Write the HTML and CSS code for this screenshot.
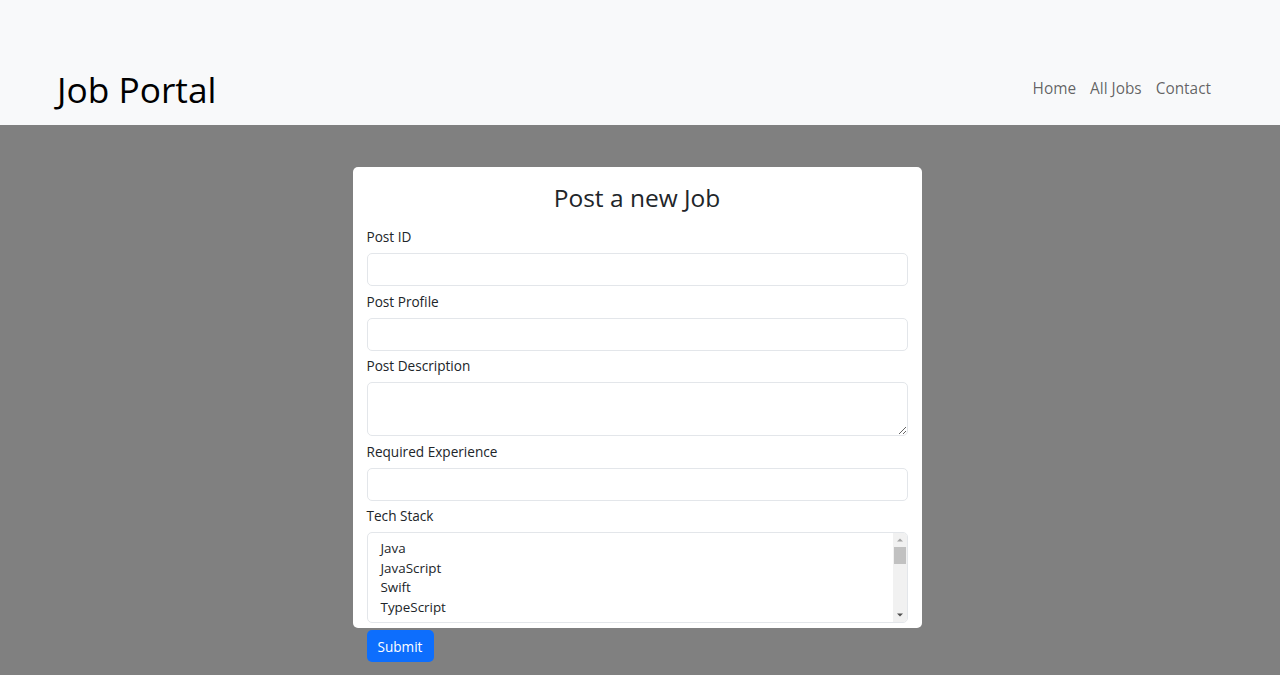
FILE: index.html
```html
<!DOCTYPE html>
<html lang="en">
<head>
<meta charset="utf-8">
<title>Job Portal</title>
<link rel="stylesheet" href="styles.css">
</head>
<body>
<header class="topbar">
  <a class="brand" href="#">Job Portal</a>
  <nav class="nav">
    <a class="nav-link" href="#">Home</a>
    <a class="nav-link" href="#">All Jobs</a>
    <a class="nav-link" href="#">Contact</a>
  </nav>
</header>
<main class="main">
  <form class="card">
    <h3 class="card-title">Post a new Job</h3>
    <div class="field">
      <label class="label" for="pid">Post ID</label>
      <input class="control" id="pid" type="text">
    </div>
    <div class="field">
      <label class="label" for="pprof">Post Profile</label>
      <input class="control" id="pprof" type="text">
    </div>
    <div class="field">
      <label class="label" for="pdesc">Post Description</label>
      <textarea class="control area" id="pdesc"></textarea>
    </div>
    <div class="field">
      <label class="label" for="rexp">Required Experience</label>
      <input class="control" id="rexp" type="text">
    </div>
    <div class="field field-last">
      <label class="label" for="tech">Tech Stack</label>
      <div class="list-wrap">
        <select class="control list" id="tech" multiple>
          <option>Java</option>
          <option>JavaScript</option>
          <option>Swift</option>
          <option>TypeScript</option>
          <option>Go</option>
          <option>Kotlin</option>
          <option>Python</option>
          <option>C++</option>
          <option>C#</option>
          <option>Ruby</option>
          <option>PHP</option>
          <option>Rust</option>
          <option>Scala</option>
          <option>Dart</option>
          <option>Django</option>
          <option>Angular</option>
        </select>
        <div class="fake-scroll" aria-hidden="true">
          <svg class="arrow" width="14" height="14" viewBox="0 0 14 14"><path d="M4 8.5 L7 5.5 L10 8.5 Z" fill="#a3a3a3"/></svg>
          <div class="track"><div class="thumb"></div></div>
          <svg class="arrow" width="14" height="14" viewBox="0 0 14 14"><path d="M4 5.5 L7 8.5 L10 5.5 Z" fill="#505050"/></svg>
        </div>
      </div>
    </div>
    <div class="submit-row">
      <button class="btn" type="button">Submit</button>
    </div>
  </form>
</main>
</body>
</html>
```
FILE: styles.css
```css
html, body {
  margin: 0;
  padding: 0;
}
body {
  background: #808080;
  font-family: "Open Sans", "Noto Sans", "DejaVu Sans", sans-serif;
  color: #212529;
  height: 675px;
  overflow: hidden;
}
.topbar {
  background: #f8f9fa;
  height: 125px;
  box-sizing: border-box;
  display: flex;
  align-items: flex-end;
  justify-content: space-between;
  padding: 0 62px 18px 57px;
}
.brand {
  font-size: 35.3px;
  line-height: 1;
  color: #000;
  text-decoration: none;
}
.nav {
  display: flex;
  padding-bottom: 9px;
}
.nav-link {
  font-size: 15.4px;
  line-height: 1.2;
  color: rgba(0, 0, 0, 0.62);
  text-decoration: none;
  padding: 0 7px;
}
.main {
  display: flex;
  justify-content: center;
  padding-top: 42px;
}
.card {
  width: 569px;
  height: 461px;
  box-sizing: border-box;
  margin-left: -6px;
  background: #fff;
  border-radius: 5px;
  padding: 15px 14px 0;
}
.card-title {
  margin: 0 0 13px;
  text-align: center;
  font-weight: 500;
  font-size: 24.5px;
  line-height: 32px;
  color: #212529;
}
.field {
  display: flex;
  flex-direction: column;
  margin-bottom: 5.5px;
}
.field-last {
  margin-bottom: 7px;
}
.label {
  font-size: 13.6px;
  line-height: 20px;
  margin-bottom: 6px;
  color: #212529;
}
.control {
  box-sizing: border-box;
  width: 100%;
  height: 33px;
  border: 1px solid #e3e6ea;
  border-radius: 5px;
  background: #fff;
  font-family: inherit;
  font-size: 13.4px;
  padding: 5px 11px;
  margin: 0;
  outline: none;
}
.area {
  height: 54px;
  resize: vertical;
}
.list-wrap {
  position: relative;
  height: 91px;
}
.list {
  display: block;
  height: 91px;
  padding: 5px 16px 5px 13px;
  color: #212529;
  scrollbar-width: none;
  overflow: hidden;
}
.list option {
  padding: 1px 0 0.7px;
  font-size: 13.4px;
  color: #212529;
}
.fake-scroll {
  position: absolute;
  top: 1px;
  right: 1px;
  bottom: 1px;
  width: 14px;
  background: #f1f1f1;
  border-radius: 0 4px 4px 0;
  display: flex;
  flex-direction: column;
}
.arrow {
  display: block;
  flex: none;
}
.track {
  flex: 1;
  padding: 0 1px;
}
.thumb {
  height: 17px;
  background: #c1c1c1;
}
.submit-row {
  display: flex;
}
.btn {
  background: #0d6efd;
  color: #fff;
  border: 0;
  border-radius: 5px;
  font-family: inherit;
  font-size: 13.6px;
  height: 32px;
  width: 67px;
  padding: 0;
  cursor: pointer;
}
```
